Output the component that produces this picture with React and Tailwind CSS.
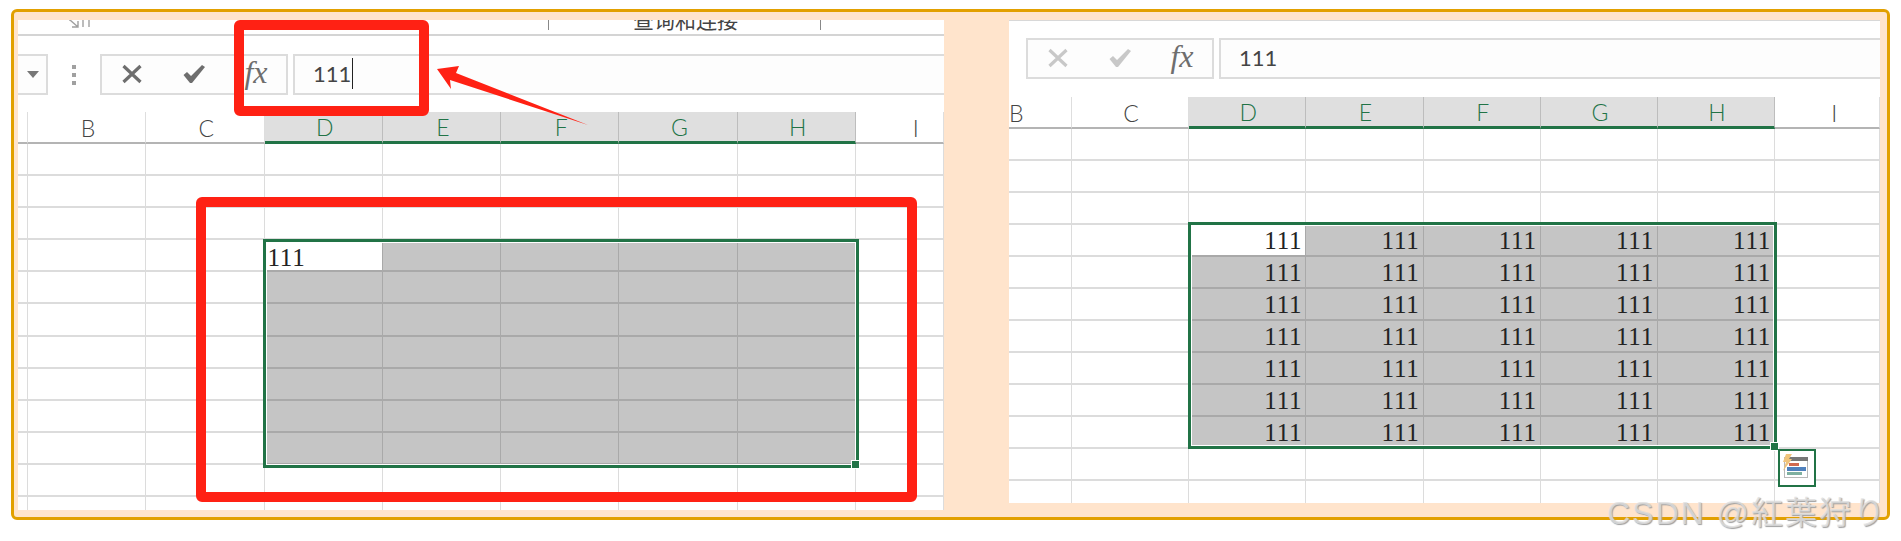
import React from 'react';

const LEFT_COLS = 'grid-cols-[10px_repeat(7,118.25px)_1fr]';
const RIGHT_COLS = 'grid-cols-[63px_repeat(6,117.2px)_1fr]';
const SELECTED_HEADERS = ['D', 'E', 'F', 'G', 'H'];

function CancelIcon({ color }) {
    return (
        <svg width="22" height="20" viewBox="0 0 22 20">
            <path d="M2.5 2 L19.5 18 M19.5 2 L2.5 18" stroke={color} strokeWidth="3.2" fill="none" />
        </svg>
    );
}

function CheckIcon({ color }) {
    return (
        <svg width="24" height="20" viewBox="0 0 24 20">
            <path d="M1.5 11 L5 8 L9 12 L20 1 L23 3 L10 19 L8 19 Z" fill={color} />
        </svg>
    );
}

function FormulaBar({ iconColor, children, boxClass }) {
    return (
        <div className={`flex gap-[5px] h-[41px] ${boxClass}`}>
            <div className="flex items-center bg-[#fdfdfd] border-2 border-[#dcdcdc] w-[188px] h-full shrink-0 pb-[2px]">
                <div className="w-[60px] flex justify-center"><CancelIcon color={iconColor} /></div>
                <div className="w-[64px] flex justify-center"><CheckIcon color={iconColor} /></div>
                <div className="w-[60px] flex justify-center font-['Liberation_Serif'] italic text-[32px] leading-none text-[#6e6e6e] pb-[3px]">fx</div>
            </div>
            <div className="flex-1 flex items-center bg-[#fdfdfd] border-y-2 border-l-2 border-[#dcdcdc] pl-[18px] pb-[2px] font-['Lato'] text-[22px] text-[#444444]">
                {children}
            </div>
        </div>
    );
}

function HeaderRow({ cols, labels, height }) {
    const isRight = cols === RIGHT_COLS;
    return (
        <div className={`grid ${cols} ${height}`}>
            {labels.map((label, i) => {
                const selected = SELECTED_HEADERS.includes(label);
                let place = isRight ? 'justify-center pl-[2px]' : 'justify-center pl-[3px]';
                if (label === 'B' && isRight) place = 'justify-start';
                if (label === 'I') place = isRight ? 'justify-start pl-[56px]' : 'justify-start pl-[57px]';
                return (
                    <div
                        key={i}
                        className={`flex items-center overflow-hidden font-['Lato'] font-light text-[23px] leading-none pt-[2px] border-r ${place} ${selected ? 'bg-[#dfdfdf] text-[#217346] border-[#bdbdbd] border-b-[3px] border-b-[#217346]' : 'text-[#444444] border-[#dedede] border-b-2 border-b-[#b4b4b4]'}`}
                    >
                        {label}
                    </div>
                );
            })}
        </div>
    );
}

function Cell({ selected, active, text, align }) {
    let tone = 'border-[#dcdcdc]';
    if (selected) tone = 'bg-[#c5c5c5] border-[#a9a9a9]';
    if (active) tone = 'bg-white border-[#a9a9a9]';
    return (
        <div className={`border-r border-b-2 flex items-center overflow-hidden font-['Liberation_Serif'] text-[25px] tracking-[0.8px] leading-none text-[#222222] ${tone} ${align === 'right' ? 'justify-end pr-[3px]' : 'justify-start pl-[3px] pt-[4px]'}`}>
            {text}
        </div>
    );
}

function Sheet({ cols, rowHeight, rowCount, columnCount, selRows, selCols, filled }) {
    const rows = [];
    for (let r = 0; r < rowCount; r++) {
        for (let c = 0; c < columnCount; c++) {
            const selected = r >= selRows[0] && r <= selRows[1] && c >= selCols[0] && c <= selCols[1];
            const active = r === selRows[0] && c === selCols[0];
            let text = '';
            if (filled && selected) text = '111';
            if (!filled && active) text = '111';
            rows.push(<Cell key={`${r}-${c}`} selected={selected} active={active} text={text} align={filled ? 'right' : 'left'} />);
        }
    }
    return <div className={`grid ${cols} ${rowHeight}`}>{rows}</div>;
}

function FlashFillIcon() {
    return (
        <svg width="38" height="38" viewBox="0 0 38 38" className="block">
            <rect x="1" y="1" width="36" height="36" fill="#ffffff" stroke="#217346" strokeWidth="2" />
            <rect x="6.5" y="8.5" width="23" height="20" fill="#ffffff" stroke="#b8b8b8" />
            <rect x="9" y="8" width="21" height="4" fill="#777777" />
            <rect x="11" y="14" width="10" height="3" fill="#d0694f" />
            <rect x="9" y="18" width="19" height="4" fill="#4f81bd" />
            <rect x="9" y="23" width="15" height="3" fill="#7fb0a0" />
            <polygon points="8,5 14,5 11,10 14,10 5,22 8,13 5,13" fill="#f0c47c" />
        </svg>
    );
}

function DialogLauncher() {
    return (
        <svg width="22" height="8" viewBox="0 0 22 8" className="block shrink-0">
            <path d="M1 0 L1 1 M9 7 L1 0 M9 1 L9 7 L3 7 M14 0 L14 7 M20 0 L20 7" stroke="#a0a0a0" strokeWidth="1.4" fill="none" />
        </svg>
    );
}

export default function App() {
    return (
        <div className="relative w-[1901px] h-[541px] bg-white overflow-hidden">
            {/* orange frame holding the two excel captures */}
            <div className="absolute left-[11px] top-[9px] w-[1879px] h-[511px] border-[3px] border-[#e2a000] rounded-[6px] bg-[#ffe4cc] pl-[4px] pr-[7px] pt-[8px] flex justify-between items-start">
                {/* left capture */}
                <div className="relative w-[926px] h-[490px] bg-white overflow-hidden">
                    <div className="h-[16px] border-b-2 border-[#d4d4d4] flex items-start overflow-hidden relative">
                        <div className="ml-[51px] shrink-0"><DialogLauncher /></div>
                        <div className="ml-[457px] w-[1px] h-[10px] bg-[#888888] shrink-0"></div>
                        <div className="ml-[84px] w-[104px] shrink-0 font-['Noto_Sans_CJK_SC'] text-[21px] leading-[21px] text-[#444444] whitespace-nowrap mt-[-11px]">查询和连接</div>
                        <div className="ml-[83px] w-[1px] h-[10px] bg-[#888888] shrink-0"></div>
                    </div>
                    <div className="flex mt-[18px] h-[41px]">
                        <div className="w-[30px] h-full bg-[#fdfdfd] border-y-2 border-r-2 border-[#dcdcdc] flex items-center justify-center shrink-0">
                            <div className="w-0 h-0 border-x-[6px] border-x-transparent border-t-[7px] border-t-[#777777] ml-[2px]"></div>
                        </div>
                        <div className="w-[52px] flex flex-col items-center justify-center gap-[4px] shrink-0">
                            <div className="w-[4px] h-[4px] bg-[#a0a0a0]"></div>
                            <div className="w-[4px] h-[4px] bg-[#a0a0a0]"></div>
                            <div className="w-[4px] h-[4px] bg-[#a0a0a0]"></div>
                        </div>
                        <FormulaBar iconColor="#6e6e6e" boxClass="flex-1">
                            <span>111</span>
                            <span className="w-[1px] h-[31px] bg-[#222222] ml-[1px]"></span>
                        </FormulaBar>
                    </div>
                    <div className="mt-[17px]">
                        <HeaderRow cols={LEFT_COLS} labels={['', 'B', 'C', 'D', 'E', 'F', 'G', 'H', 'I']} height="h-[32px]" />
                        <Sheet cols={LEFT_COLS} rowHeight="auto-rows-[32.1px]" rowCount={12} columnCount={9} selRows={[3, 9]} selCols={[3, 7]} filled={false} />
                    </div>
                    <div className="absolute left-[245px] top-[219px] w-[596px] h-[229px] border-[3px] border-[#217346] shadow-[inset_0_0_0_1px_#ffffff]">
                        <div className="absolute right-[-4px] bottom-[-4px] w-[9px] h-[9px] bg-[#217346] border border-white"></div>
                    </div>
                </div>

                {/* right capture */}
                <div className="relative w-[871px] h-[483px] bg-white overflow-hidden border-t border-[#d8d8d8]">
                    <div className="pt-[17px] pl-[17px]">
                        <FormulaBar iconColor="#c8c8c8" boxClass="">
                            <span>111</span>
                        </FormulaBar>
                    </div>
                    <div className="mt-[18px]">
                        <HeaderRow cols={RIGHT_COLS} labels={['B', 'C', 'D', 'E', 'F', 'G', 'H', 'I']} height="h-[32px]" />
                        <Sheet cols={RIGHT_COLS} rowHeight="auto-rows-[32px]" rowCount={12} columnCount={8} selRows={[3, 9]} selCols={[2, 6]} filled={true} />
                    </div>
                    <div className="absolute left-[179px] top-[201px] w-[589px] h-[227px] border-[3px] border-[#217346] shadow-[inset_0_0_0_1px_#ffffff]">
                        <div className="absolute right-[-5px] bottom-[-5px] w-[9px] h-[9px] bg-[#217346] border border-white"></div>
                    </div>
                    <div className="absolute left-[769px] top-[428px]"><FlashFillIcon /></div>
                </div>
            </div>

            {/* red annotations drawn over the captures */}
            <div className="absolute left-[234px] top-[20px] w-[195px] h-[96px] border-[10px] border-[#ff2114] rounded-[6px]"></div>
            <div className="absolute left-[196px] top-[197px] w-[721px] h-[305px] border-[10px] border-[#ff2114] rounded-[6px]"></div>
            <svg className="absolute left-0 top-0 pointer-events-none" width="1901" height="541">
                <polygon points="437,69 459,66 456,73 588,125 450,80 451,89" fill="#ff2114" />
            </svg>

            {/* watermark */}
            <div className="absolute left-[1607px] top-[493px] whitespace-nowrap font-['Liberation_Sans','Noto_Sans_CJK_JP',sans-serif] text-[32px] tracking-[2px] leading-[40px] text-[#e0e0e0]/80 [text-shadow:1px_1px_1px_#a0a0a0]">
                CSDN @紅葉狩り
            </div>
        </div>
    );
}
